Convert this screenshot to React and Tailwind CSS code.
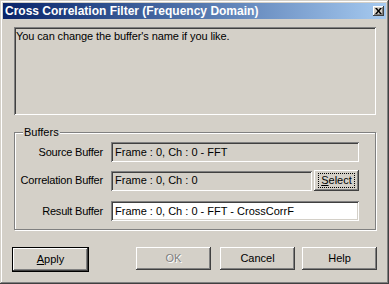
import React from "react";

const raised =
  "bg-[#d4d0c8] shadow-[inset_-1px_-1px_0_#404040,inset_1px_1px_0_#ffffff,inset_-2px_-2px_0_#808080,inset_2px_2px_0_#d4d0c8]";
const sunken =
  "shadow-[inset_1px_1px_0_#808080,inset_-1px_-1px_0_#ffffff,inset_2px_2px_0_#404040,inset_-2px_-2px_0_#d4d0c8]";

const Field = ({ value, white, className = "" }) => (
  <div
    className={`h-[20px] flex items-center pl-[4px] text-[11px] text-black ${sunken} ${
      white ? "bg-white" : "bg-[#d4d0c8]"
    } ${className}`}
  >
    {value}
  </div>
);

const Button = ({ children, disabled, className = "" }) => (
  <div
    className={`w-[75px] h-[23px] flex items-center justify-center text-[11px] ${raised} ${
      disabled ? "text-[#808080] [text-shadow:1px_1px_0_#ffffff]" : "text-black"
    } ${className}`}
  >
    {children}
  </div>
);

const Label = ({ children }) => (
  <span className="w-[88px] text-right text-[11px] tracking-[-0.2px] text-black">{children}</span>
);

const App = () => {
  return (
    <div
      className="w-[389px] h-[284px] bg-[#d4d0c8] p-[3px] flex flex-col shadow-[inset_-1px_-1px_0_#404040,inset_1px_1px_0_#d4d0c8,inset_-2px_-2px_0_#808080,inset_2px_2px_0_#ffffff]"
      style={{ fontFamily: '"Liberation Sans", Arial, sans-serif' }}
    >
      {/* title bar */}
      <div className="h-[16px] flex items-center justify-between pl-[2px] pr-[2px] bg-gradient-to-r from-[#0a246a] to-[#a6caf0]">
        <span className="text-white font-bold text-[12px] leading-none">
          Cross Correlation Filter (Frequency Domain)
        </span>
        <div className={`w-[11px] h-[10px] flex items-center justify-center ${raised}`}>
          <svg width="7" height="6" viewBox="0 0 7 6">
            <path d="M0 0h2l1.5 2 1.5-2h2L4.5 3 7 6H5L3.5 4 2 6H0l2.5-3z" fill="#000" />
          </svg>
        </div>
      </div>

      {/* body */}
      <div className="pl-[11px] pr-[10px] pt-[8px]">
        <div className={`h-[88px] pl-[2px] pt-[3px] text-[11px] leading-[13px] tracking-[-0.1px] text-black ${sunken}`}>
          You can change the buffer's name if you like.
        </div>

        {/* buffers group */}
        <div className="relative mt-[17px] h-[98px] border border-[#808080] shadow-[1px_1px_0_#ffffff,inset_1px_1px_0_#ffffff] pt-[9px] pr-[16px]">
          <span className="absolute left-[8px] top-[-7px] bg-[#d4d0c8] px-[1px] text-[11px] leading-[13px] text-black">
            Buffers
          </span>
          <div className="flex items-center">
            <Label>Source Buffer</Label>
            <Field value="Frame : 0, Ch : 0 - FFT" className="ml-[8px] flex-1" />
          </div>
          <div className="flex items-center mt-[8px]">
            <Label>Correlation Buffer</Label>
            <Field value="Frame : 0, Ch : 0" className="ml-[8px] flex-1" />
            <div className={`ml-[2px] w-[45px] h-[21px] flex items-center justify-center ${raised}`}>
              <span className="border border-dotted border-black px-[2px] text-[11px] leading-[13px] text-black">
                <span className="underline">S</span>elect
              </span>
            </div>
          </div>
          <div className="flex items-center mt-[10px]">
            <Label>Result Buffer</Label>
            <Field value="Frame : 0, Ch : 0 - FFT - CrossCorrF" white className="ml-[8px] flex-1" />
          </div>
        </div>
      </div>

      {/* buttons */}
      <div className="flex mt-[17px] pl-[9px]">
        <div className="border border-black">
          <Button className="w-[73px] h-[21px]">
            <span>
              <span className="underline">A</span>pply
            </span>
          </Button>
        </div>
        <Button disabled className="ml-[47px]">OK</Button>
        <Button className="ml-[9px]">Cancel</Button>
        <Button className="ml-[7px]">Help</Button>
      </div>
    </div>
  );
};

export default App;
